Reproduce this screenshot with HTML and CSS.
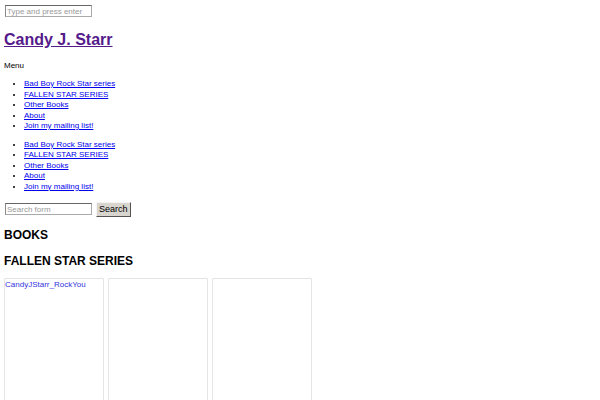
FILE: index.html
```html
<!DOCTYPE html>
<html>
<head>
<meta charset="utf-8">
<link rel="stylesheet" href="styles.css">
</head>
<body>
<form class="top-search"><input class="field" type="text" placeholder="Type and press enter"></form>
<h1 class="site-title"><a href="#">Candy J. Starr</a></h1>
<div class="menu-label">Menu</div>
<ul class="nav">
  <li><a href="#">Bad Boy Rock Star series</a></li>
  <li><a href="#">FALLEN STAR SERIES</a></li>
  <li><a href="#">Other Books</a></li>
  <li><a href="#">About</a></li>
  <li><a href="#">Join my mailing list!</a></li>
</ul>
<ul class="nav">
  <li><a href="#">Bad Boy Rock Star series</a></li>
  <li><a href="#">FALLEN STAR SERIES</a></li>
  <li><a href="#">Other Books</a></li>
  <li><a href="#">About</a></li>
  <li><a href="#">Join my mailing list!</a></li>
</ul>
<form class="search-form"><input class="field" type="text" placeholder="Search form"><button class="btn" type="button">Search</button></form>
<h2 class="section">BOOKS</h2>
<h2 class="section section-last">FALLEN STAR SERIES</h2>
<div class="books">
  <div class="book"><span class="alt">CandyJStarr_RockYou</span></div>
  <div class="book"></div>
  <div class="book"></div>
</div>
</body>
</html>
```

FILE: styles.css
```css
html, body { background: #fff; }
body {
  margin: 4px;
  font-family: "Liberation Sans", Arial, sans-serif;
  font-size: 8px;
  color: #000;
}
a { color: #0000ee; }
.top-search { margin: 0; height: 12px; }
.field {
  box-sizing: border-box;
  width: 87px;
  height: 12px;
  margin: 1px 0 0 1px;
  padding: 0 1px;
  border: 1px solid #aaa;
  border-top-color: #666;
  border-left-color: #888;
  font-family: "Liberation Sans", Arial, sans-serif;
  font-size: 8px;
  vertical-align: top;
}
.field::placeholder { color: #999; }
.site-title {
  font-size: 16px;
  margin: 13px 0 10.5px;
  line-height: 21px;
}
.site-title a { color: #551a8b; }
.menu-label { line-height: 10.5px; }
.nav {
  margin: 8px 0;
  padding-left: 20px;
  line-height: 10.5px;
}
.search-form {
  margin: 9px 0 0;
  display: flex;
  align-items: center;
  gap: 4px;
  height: 16px;
}
.search-form .field { margin: 0 0 0 1px; }
.btn {
  box-sizing: border-box;
  height: 15px;
  padding: 0 2px;
  font-family: "Liberation Sans", Arial, sans-serif;
  font-size: 9px;
  background: #d8d5cf;
  border: 1px solid;
  border-color: #f4f4f4 #555 #555 #f4f4f4;
  color: #000;
}
.section {
  font-size: 12px;
  margin: 11px 0;
  line-height: 15px;
}
.section-last { margin-bottom: 8.5px; }
.books {
  display: flex;
  gap: 4px;
}
.book {
  box-sizing: border-box;
  width: 100px;
  height: 140px;
  border: 1.5px solid #e4e4e4;
  border-radius: 1px;
  padding: 1px 0 0 0;
}
.alt {
  color: #3333dd;
  font-size: 8px;
}
```
